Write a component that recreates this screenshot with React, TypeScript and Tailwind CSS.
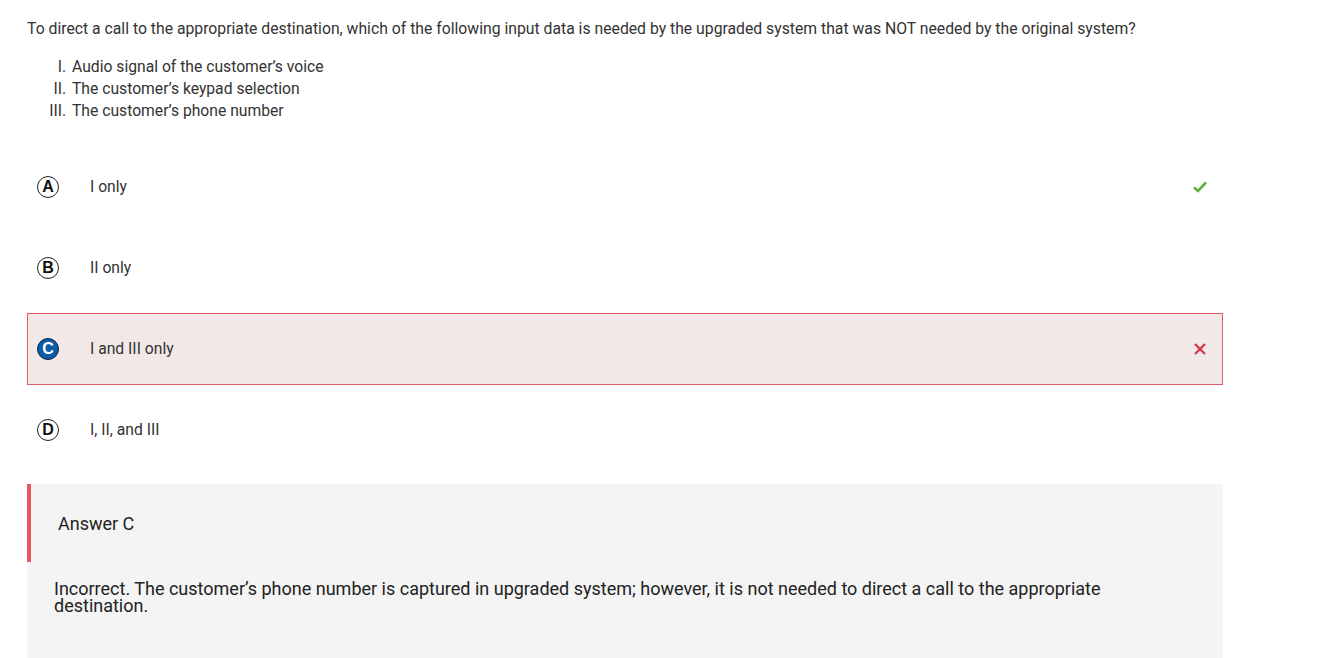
import React from "react";

const font = { fontFamily: "Roboto, 'Liberation Sans', sans-serif" };

function Check() {
  return (
    <svg width="16" height="14" viewBox="0 0 16 14">
      <path d="M2 7.5 L6 11 L14 2.5" fill="none" stroke="#5cb23e" strokeWidth="2.6" />
    </svg>
  );
}

function Cross() {
  return (
    <svg width="14" height="14" viewBox="0 0 14 14">
      <path d="M2 2 L12 12 M12 2 L2 12" fill="none" stroke="#d33a45" strokeWidth="2.4" />
    </svg>
  );
}

type Opt = { letter: string; text: string; state?: "correct" | "wrong" };

const options: Opt[] = [
  { letter: "A", text: "I only", state: "correct" },
  { letter: "B", text: "II only" },
  { letter: "C", text: "I and III only", state: "wrong" },
  { letter: "D", text: "I, II, and III" },
];

export default function App() {
  return (
    <div className="w-[1330px] h-[658px] overflow-hidden bg-white text-[#333333]" style={font}>
      <div className="pl-[27px] w-[1223px]">
        <p className="pt-[18px] text-[15.75px] leading-[22px]">
          To direct a call to the appropriate destination, which of the following input data is needed by the upgraded system that was NOT needed by the original system?
        </p>
        <ol className="mt-[16px] text-[15.7px] leading-[22px] list-[upper-roman] pl-[43px]">
          <li className="pl-[2px]">Audio signal of the customer’s voice</li>
          <li className="pl-[2px]">The customer’s keypad selection</li>
          <li className="pl-[2px]">The customer’s phone number</li>
        </ol>
        <div className="mt-[29px] flex flex-col gap-[9px]">
          {options.map((o) => {
            const wrong = o.state === "wrong";
            return (
              <div
                key={o.letter}
                className={
                  "h-[72px] flex items-center border " +
                  (wrong ? "bg-[#f2e8e8] border-[#e05a68]" : "border-transparent")
                }
              >
                <div className="pl-[9px] w-[62px] flex">
                  {wrong ? (
                    <span
                      className="w-[22px] h-[22px] rounded-full bg-[#0a5ca8] border-[1.5px] border-[#0b2540] text-white flex items-center justify-center text-[16px] font-bold leading-none"
                      style={{ fontFamily: "'Liberation Sans', Arial, sans-serif" }}
                    >
                      {o.letter}
                    </span>
                  ) : (
                    <span
                      className="w-[22px] h-[22px] rounded-full border-[1.5px] border-[#222] text-[#111] flex items-center justify-center text-[16px] font-bold leading-none"
                      style={{ fontFamily: "'Liberation Sans', Arial, sans-serif" }}
                    >
                      {o.letter}
                    </span>
                  )}
                </div>
                <div className="flex-1 text-[15.7px] text-[#333]">{o.text}</div>
                <div className="w-[44px] flex justify-center">
                  {o.state === "correct" && <Check />}
                  {wrong && <Cross />}
                </div>
              </div>
            );
          })}
        </div>
        <div className="mt-[18px] bg-[#f4f4f4] h-[200px]">
          <div className="border-l-[4px] border-[#e85766] h-[78px] flex items-center pl-[27px] pt-[1px] text-[18px] text-[#222]">
            Answer C
          </div>
          <p className="pl-[27px] pt-[18px] w-[1110px] text-[18px] leading-[17px] text-[#222]">
            Incorrect. The customer’s phone number is captured in upgraded system; however, it is not needed to direct a call to the appropriate destination.
          </p>
        </div>
      </div>
    </div>
  );
}
